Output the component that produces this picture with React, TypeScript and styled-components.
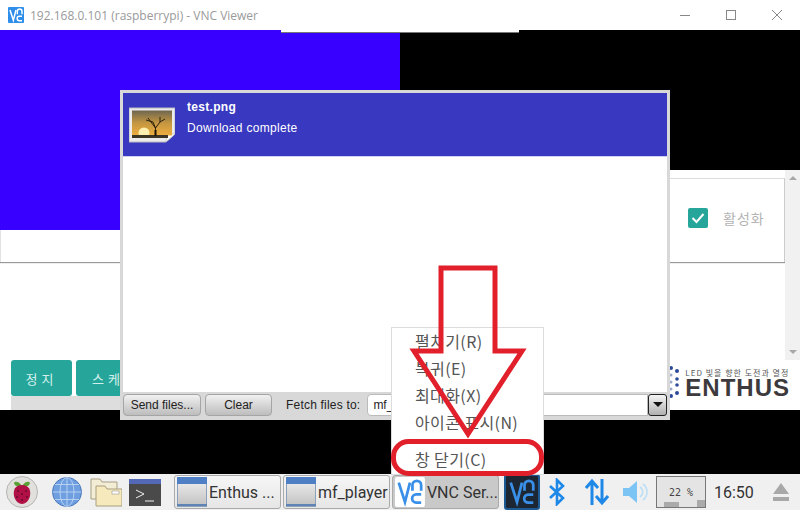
import styled, { createGlobalStyle } from 'styled-components';

const GlobalStyle = createGlobalStyle`
  html, body {
    margin: 0;
    padding: 0;
    background: #000;
  }
  * {
    box-sizing: border-box;
  }
`;

const Root = styled.div`
  position: relative;
  width: 800px;
  height: 510px;
  overflow: hidden;
  display: flex;
  flex-direction: column;
  font-family: 'Liberation Sans', Arial, sans-serif;
`;

// Barra de titulo
const TitleBar = styled.header`
  height: 30px;
  flex: none;
  background: #fff;
  display: flex;
  align-items: center;
  padding-left: 8px;
`;

const TitleText = styled.span`
  margin-left: 6px;
  font-family: 'Open Sans', sans-serif;
  font-size: 12px;
  color: #9a9a9a;
  white-space: nowrap;
`;

const WindowControls = styled.div`
  margin-left: auto;
  display: flex;
`;

const WindowButton = styled.div`
  width: 46px;
  height: 30px;
  display: flex;
  align-items: center;
  justify-content: center;
`;

const Screen = styled.main`
  flex: 1;
  background: #000;
  position: relative;
`;

const TopStrip = styled.div`
  position: absolute;
  left: 281px;
  top: 0;
  width: 238px;
  height: 3px;
  background: #fff;
  border-bottom: 1px solid #777;
`;

// Pagina por tras
const Page = styled.div`
  height: 380px;
  background: #fff;
  overflow: hidden;
`;

const TopArea = styled.div`
  height: 330px;
  display: grid;
  grid-template-columns: 400px 400px;
`;

const LeftColumn = styled.div`
  display: flex;
  flex-direction: column;
`;

const BluePreview = styled.div`
  height: 200px;
  background: #3700ff;
`;

const CardTail = styled.div`
  height: 32px;
  background: #fff;
  border-left: 1px solid #e2e2e2;
  box-shadow: 0 1px 1px #999;
`;

const RightColumn = styled.div`
  display: flex;
  flex-direction: column;
`;

const BlackPreview = styled.div`
  height: 140px;
  flex: none;
  background: #000;
`;

const RightBody = styled.div`
  flex: 1;
  display: flex;
`;

const CardWrap = styled.div`
  flex: 1;
  padding-top: 8px;
`;

const OptionCard = styled.div`
  height: 84px;
  background: #fff;
  border-top: 1px solid #ddd;
  border-right: 1px solid #ccc;
  box-shadow: 0 1px 1px #999;
  display: flex;
  align-items: center;
  padding: 0 0 6px 288px;
  gap: 15px;
`;

const CheckBox = styled.div`
  width: 20px;
  height: 20px;
  border-radius: 2px;
  background: #26a69a;
  display: flex;
  align-items: center;
  justify-content: center;
`;

const CheckLabel = styled.span`
  font-family: 'Noto Sans CJK KR', sans-serif;
  font-size: 14px;
  letter-spacing: 1px;
  color: #b4b4b4;
`;

const ScrollTrack = styled.div`
  width: 15px;
  flex: none;
  background: #f1f1f1;
  display: flex;
  flex-direction: column;
  justify-content: space-between;
  align-items: center;
  padding: 6px 0;
`;

const ScrollArrow = styled.div<{ $down?: boolean }>`
  width: 0;
  height: 0;
  border-left: 4px solid transparent;
  border-right: 4px solid transparent;
  ${(p) => (p.$down ? 'border-top: 4px solid #a8a8a8;' : 'border-bottom: 4px solid #a8a8a8;')}
`;

const BottomArea = styled.div`
  height: 50px;
  display: flex;
  justify-content: space-between;
  padding-left: 11px;
`;

const ActionGroup = styled.div`
  width: 260px;
`;

const ActionRow = styled.div`
  display: flex;
  gap: 4px;
`;

const ActionButton = styled.div<{ $w: number }>`
  height: 36px;
  width: ${(p) => p.$w}px;
  flex: none;
  background: #26a69a;
  border-radius: 3px;
  color: #d5f0ec;
  font-family: 'Noto Sans CJK KR', sans-serif;
  font-size: 13px;
  letter-spacing: 4px;
  display: flex;
  align-items: center;
  justify-content: center;
`;

const InfoStrip = styled.div`
  height: 14px;
  background: #ddd;
  padding: 13px 0 0 14px;
  font-size: 11px;
  letter-spacing: 1px;
  color: #888;
  white-space: nowrap;
  overflow: hidden;
`;

const Logo = styled.div`
  display: flex;
  align-items: center;
  gap: 5px;
  padding: 3px 10px 0 0;
  height: 41px;
`;

const LogoText = styled.div`
  display: flex;
  flex-direction: column;
`;

const LogoTag = styled.span`
  font-family: 'Noto Sans CJK KR', sans-serif;
  font-size: 8px;
  line-height: 11px;
  letter-spacing: 1px;
  color: #555;
  white-space: nowrap;
`;

const LogoName = styled.span`
  font-size: 24px;
  line-height: 20px;
  font-weight: 700;
  letter-spacing: 1px;
  color: #3c3a3c;
`;

// Janela de transferencia
const TransferDialog = styled.section`
  position: absolute;
  left: 120px;
  top: 90px;
  width: 550px;
  height: 330px;
  background: #d8d8d8;
  padding: 3px 3px 0;
  display: flex;
  flex-direction: column;
`;

const TransferHeader = styled.div`
  height: 64px;
  flex: none;
  background: #3838c0;
  border-bottom: 1px solid #d0d0f0;
  display: flex;
  padding: 7px 0 0 6px;
  gap: 12px;
  color: #fff;
`;

const FileIconSlot = styled.div`
  margin-top: 7px;
  display: flex;
`;

const FileName = styled.div`
  font-size: 12px;
  font-weight: 700;
  letter-spacing: 0.3px;
  line-height: 14px;
`;

const FileStatus = styled.div`
  font-size: 12px;
  letter-spacing: 0.3px;
  line-height: 14px;
  margin-top: 7px;
`;

const TransferBody = styled.div`
  flex: 1;
  background: #fff;
`;

const TransferFooter = styled.div`
  height: 28px;
  flex: none;
  display: flex;
  align-items: center;
  padding-bottom: 3px;
`;

const FltkButton = styled.div<{ $w: number }>`
  width: ${(p) => p.$w}px;
  height: 22px;
  flex: none;
  margin-right: 4px;
  border: 1px solid #a5a5a5;
  border-radius: 4px;
  background: linear-gradient(#f0f0f0, #bdbdbd);
  font-size: 12px;
  color: #222;
  display: flex;
  align-items: center;
  justify-content: center;
`;

const FetchLabel = styled.span`
  margin: 0 7px 0 10px;
  font-size: 12px;
  letter-spacing: 0.2px;
  color: #222;
  white-space: nowrap;
`;

const FetchInput = styled.div`
  flex: 1;
  height: 22px;
  background: #fff;
  border: 1px solid #bbb;
  border-radius: 4px 0 0 4px;
  padding-left: 5px;
  font-size: 12px;
  line-height: 20px;
  color: #222;
`;

const DropButton = styled.div`
  width: 19px;
  height: 22px;
  flex: none;
  border: 1px solid #222;
  border-radius: 3px;
  background: linear-gradient(#f4f4f4, #b0b0b0);
  display: flex;
  align-items: center;
  justify-content: center;
`;

const DropArrow = styled.div`
  width: 0;
  height: 0;
  border-left: 5px solid transparent;
  border-right: 5px solid transparent;
  border-top: 5px solid #111;
`;

// Menu de contexto
const ContextMenu = styled.ul`
  position: absolute;
  left: 391px;
  top: 327px;
  width: 153px;
  height: 148px;
  margin: 0;
  padding: 0;
  list-style: none;
  background: #fff;
  border: 1px solid #dcdcdc;
`;

const MenuItem = styled.li<{ $gap?: boolean }>`
  height: 27px;
  line-height: 27px;
  padding-left: 23px;
  margin-top: ${(p) => (p.$gap ? '10px' : '0')};
  font-family: 'Noto Sans CJK KR', sans-serif;
  font-size: 16px;
  letter-spacing: 0.4px;
  color: #555;
  white-space: nowrap;
`;

const Annotation = styled.svg`
  position: absolute;
  left: 0;
  top: 0;
  pointer-events: none;
`;

// Barra de tarefas
const Taskbar = styled.footer`
  height: 36px;
  flex: none;
  background: #f0f0f0;
  display: flex;
  align-items: center;
  padding-left: 6px;
  font-family: Roboto, sans-serif;
`;

const Launchers = styled.div`
  display: flex;
  align-items: center;
  width: 168px;
  flex: none;
`;

const LaunchIcon = styled.div<{ $w: number }>`
  width: ${(p) => p.$w}px;
  flex: none;
  display: flex;
`;

const TaskButton = styled.div<{ $active?: boolean }>`
  width: 107px;
  height: 34px;
  flex: none;
  margin-right: 2px;
  border: 1px solid #aaa;
  border-radius: 3px;
  background: ${(p) => (p.$active ? '#c9c9c9' : 'linear-gradient(#f6f6f6, #e6e6e6)')};
  display: flex;
  align-items: center;
  gap: 2px;
  padding-left: 2px;
  font-size: 16px;
  color: #333;
  white-space: nowrap;
  overflow: hidden;
`;

const TrayVnc = styled.div`
  margin-left: 3px;
  width: 36px;
  height: 36px;
  flex: none;
  background: #1c2733;
  border: 2px solid #1d5a94;
  border-radius: 3px;
  display: flex;
  align-items: center;
  justify-content: center;
`;

const TrayIcon = styled.div<{ $ml: number }>`
  margin-left: ${(p) => p.$ml}px;
  display: flex;
  flex: none;
`;

const CpuMonitor = styled.div`
  position: relative;
  margin-left: 7px;
  width: 50px;
  height: 32px;
  flex: none;
  background: #e4e4e4;
  border: 1px solid #777;
  display: flex;
  align-items: center;
  justify-content: center;
  font-family: 'DejaVu Sans Mono', monospace;
  font-size: 10px;
  color: #444;
  white-space: pre;
`;

const CpuGraph = styled.svg`
  position: absolute;
  left: 0;
  bottom: 0;
`;

const Clock = styled.span`
  margin-left: 8px;
  font-size: 16px;
  color: #333;
`;

function VncLogo({ size, bg, fg }: { size: number; bg?: string; fg: string }) {
  return (
    <svg width={size} height={size} viewBox="0 0 24 24">
      {bg && <rect width="24" height="24" rx="1.5" fill={bg} />}
      <path d="M3 4.5 L8 20 L12 4.5" fill="none" stroke={fg} strokeWidth="2.2" />
      <path d="M14 11 V6.5 A3 3 0 0 1 21 6.5 V11" fill="none" stroke={fg} strokeWidth="2.2" />
      <path d="M21 14 H17 A3 3 0 0 0 17 20.5 H21" fill="none" stroke={fg} strokeWidth="2.2" />
    </svg>
  );
}

function SunsetIcon() {
  return (
    <svg width="46" height="36" viewBox="0 0 46 36">
      <defs>
        <linearGradient id="sky" x1="0" y1="0" x2="0" y2="1">
          <stop offset="0" stopColor="#6e6650" />
          <stop offset="0.5" stopColor="#c49640" />
          <stop offset="1" stopColor="#eeae40" />
        </linearGradient>
      </defs>
      <path d="M0 1 H46 V27 L37 35 H0 Z" fill="#ececec" stroke="#bbb" />
      <path d="M37 35 L46 27 H38 Z" fill="#fff" stroke="#aaa" strokeWidth="0.5" />
      <rect x="3" y="3.5" width="40" height="25" fill="url(#sky)" />
      <circle cx="15" cy="26" r="5.5" fill="#fff0b0" />
      <rect x="3" y="28" width="36" height="3" fill="#3c3424" />
      <path
        d="M26.5 29 L26.5 21 L19 11 M26.5 21 L31 15 L36 12 M26.5 21 L24 15 L17 13 M31 15 L31 10"
        fill="none"
        stroke="#1c1408"
        strokeWidth="0.9"
      />
      <rect x="25.5" y="23" width="2" height="6" fill="#1c1408" />
    </svg>
  );
}

function WindowIcon() {
  return (
    <svg width="30" height="30" viewBox="0 0 30 30">
      <defs>
        <linearGradient id="pane" x1="0" y1="0" x2="0" y2="1">
          <stop offset="0" stopColor="#f2f2f2" />
          <stop offset="1" stopColor="#c0c0c0" />
        </linearGradient>
      </defs>
      <rect x="0.5" y="0.5" width="29" height="29" fill="url(#pane)" stroke="#8ca0b8" />
      <rect x="0" y="0" width="30" height="7" fill="#4f7fc4" />
      <rect x="0" y="27" width="30" height="2" fill="#5f83b4" />
    </svg>
  );
}

function RaspberryIcon() {
  return (
    <svg width="32" height="32" viewBox="0 0 32 32">
      <circle cx="16" cy="16" r="15.5" fill="#e2e0dc" stroke="#b5b5b5" />
      <path d="M16 10 C12 4 8 6 8 7 C9 11 13 11 16 10 C19 11 23 11 24 7 C24 6 20 4 16 10Z" fill="#5ba035" />
      <path d="M16 9 C23 9 25 14 24 20 C23 25 19 28 16 28 C13 28 9 25 8 20 C7 14 9 9 16 9Z" fill="#b01046" />
      <g fill="#6e0a2c">
        <circle cx="12" cy="15" r="1" />
        <circle cx="20" cy="15" r="1" />
        <circle cx="16" cy="18" r="1" />
        <circle cx="11" cy="21" r="1" />
        <circle cx="21" cy="21" r="1" />
        <circle cx="16" cy="24" r="1" />
      </g>
    </svg>
  );
}

function GlobeIcon() {
  return (
    <svg width="30" height="30" viewBox="0 0 30 30">
      <circle cx="15" cy="15" r="14.5" fill="#6f9fe0" stroke="#4a78bd" />
      <g fill="none" stroke="#c6dcf6" strokeWidth="0.8">
        <ellipse cx="15" cy="15" rx="7" ry="14.5" />
        <path d="M15 .5 V29.5 M.5 15 H29.5 M3 7.5 H27 M3 22.5 H27" />
      </g>
    </svg>
  );
}

function FolderIcon() {
  return (
    <svg width="32" height="30" viewBox="0 0 32 30">
      <path d="M1 2 H10 L12 5 H27 V22 H1 Z" fill="#f4edd6" stroke="#a89f80" />
      <path d="M6 9 H15 L17 12 H32 V29 H6 Z" fill="#f6e9bc" stroke="#a89f80" />
      <rect x="22" y="14" width="7" height="3" fill="#fff" stroke="#999" strokeWidth="0.6" />
    </svg>
  );
}

function TerminalIcon() {
  return (
    <svg width="32" height="27" viewBox="0 0 32 27">
      <rect width="32" height="27" fill="#4a4a4a" />
      <rect width="32" height="5" fill="#5468b8" />
      <path d="M7 11 L15 15 L7 19 M16 22 H25" fill="none" stroke="#f0f0f0" strokeWidth="1" />
    </svg>
  );
}

export default function App() {
  return (
    <Root>
      <GlobalStyle />
      <TitleBar>
        <VncLogo size={16} bg="#2f8eea" fg="#fff" />
        <TitleText>192.168.0.101 (raspberrypi) - VNC Viewer</TitleText>
        <WindowControls>
          <WindowButton>
            <svg width="10" height="10"><path d="M0 5.5 H10" stroke="#888" /></svg>
          </WindowButton>
          <WindowButton>
            <svg width="10" height="10"><rect x=".5" y=".5" width="9" height="9" fill="none" stroke="#888" /></svg>
          </WindowButton>
          <WindowButton>
            <svg width="10" height="10"><path d="M0 0 L10 10 M10 0 L0 10" stroke="#888" /></svg>
          </WindowButton>
        </WindowControls>
      </TitleBar>

      <Screen>
        <Page>
          <TopArea>
            <LeftColumn>
              <BluePreview />
              <CardTail />
            </LeftColumn>
            <RightColumn>
              <BlackPreview />
              <RightBody>
                <CardWrap>
                  <OptionCard>
                    <CheckBox>
                      <svg width="14" height="12" viewBox="0 0 14 12">
                        <path d="M1.5 6 L5.5 10 L12.5 2" fill="none" stroke="#fff" strokeWidth="2" />
                      </svg>
                    </CheckBox>
                    <CheckLabel>활성화</CheckLabel>
                  </OptionCard>
                </CardWrap>
                <ScrollTrack>
                  <ScrollArrow />
                  <ScrollArrow $down />
                </ScrollTrack>
              </RightBody>
            </RightColumn>
          </TopArea>
          <BottomArea>
            <ActionGroup>
              <ActionRow>
                <ActionButton $w={61}>정지</ActionButton>
                <ActionButton $w={80}>스케줄</ActionButton>
              </ActionRow>
              <InfoStrip>MEDIA PLAYER</InfoStrip>
            </ActionGroup>
            <Logo>
              <svg width="12" height="32" viewBox="0 0 12 32">
                <g fill="#2d4a9a">
                  <circle cx="3" cy="2" r="2" />
                  <circle cx="9" cy="5" r="2" />
                  <circle cx="3" cy="30" r="2" />
                  <circle cx="9" cy="27" r="2" />
                  <circle cx="9" cy="13" r="1.8" />
                  <circle cx="9" cy="19" r="1.8" />
                </g>
                <g fill="#9aa8cc">
                  <circle cx="3" cy="9" r="1.5" />
                  <circle cx="3" cy="16" r="1.5" />
                  <circle cx="3" cy="23" r="1.5" />
                </g>
              </svg>
              <LogoText>
                <LogoTag>LED 빛을 향한 도전과 열정</LogoTag>
                <LogoName>ENTHUS</LogoName>
              </LogoText>
            </Logo>
          </BottomArea>
        </Page>
        <TopStrip />
      </Screen>

      <Taskbar>
        <Launchers>
          <LaunchIcon $w={46}><RaspberryIcon /></LaunchIcon>
          <LaunchIcon $w={38}><GlobeIcon /></LaunchIcon>
          <LaunchIcon $w={39}><FolderIcon /></LaunchIcon>
          <LaunchIcon $w={44}><TerminalIcon /></LaunchIcon>
        </Launchers>
        <TaskButton><WindowIcon />Enthus ...</TaskButton>
        <TaskButton><WindowIcon />mf_player</TaskButton>
        <TaskButton $active>
          <VncLogo size={30} bg="#fff" fg="#3a8fe8" />VNC Ser...
        </TaskButton>
        <TrayVnc>
          <VncLogo size={30} fg="#3a8fe8" />
        </TrayVnc>
        <TrayIcon $ml={8}>
          <svg width="18" height="28" viewBox="0 0 18 28">
            <path d="M2 8 L15 20 L9 26 V2 L15 8 L2 20" fill="none" stroke="#1e88e8" strokeWidth="2.6" />
          </svg>
        </TrayIcon>
        <TrayIcon $ml={19}>
          <svg width="24" height="28" viewBox="0 0 24 28">
            <path d="M7 27 V3 M1 10 L7 3 L13 10 M17 1 V25 M11 18 L17 25 L23 18" fill="none" stroke="#1e88e8" strokeWidth="3" />
          </svg>
        </TrayIcon>
        <TrayIcon $ml={14}>
          <svg width="26" height="24" viewBox="0 0 26 24">
            <path d="M0 8 H6 L14 1 V23 L6 16 H0 Z" fill="#7cc4f4" />
            <path d="M17 7 A6 6 0 0 1 17 17 M20 4 A10 10 0 0 1 20 20" fill="none" stroke="#bcdff6" strokeWidth="1.6" />
          </svg>
        </TrayIcon>
        <CpuMonitor>
          22 %
          <CpuGraph width="48" height="10" viewBox="0 0 48 10">
            <path d="M7 10 V5 H22 V10 Z M40 10 V3 H48 V10 Z" fill="#aaa" />
          </CpuGraph>
        </CpuMonitor>
        <Clock>16:50</Clock>
        <TrayIcon $ml={19}>
          <svg width="16" height="18" viewBox="0 0 16 18">
            <path d="M8 0 L16 11 H0 Z M0 14 H16 V18 H0 Z" fill="#a8a8a8" />
          </svg>
        </TrayIcon>
      </Taskbar>

      <TransferDialog>
        <TransferHeader>
          <FileIconSlot><SunsetIcon /></FileIconSlot>
          <div>
            <FileName>test.png</FileName>
            <FileStatus>Download complete</FileStatus>
          </div>
        </TransferHeader>
        <TransferBody />
        <TransferFooter>
          <FltkButton $w={78}>Send files...</FltkButton>
          <FltkButton $w={67}>Clear</FltkButton>
          <FetchLabel>Fetch files to:</FetchLabel>
          <FetchInput>mf_player</FetchInput>
          <DropButton><DropArrow /></DropButton>
        </TransferFooter>
      </TransferDialog>

      <ContextMenu>
        <MenuItem>펼치기(R)</MenuItem>
        <MenuItem>복귀(E)</MenuItem>
        <MenuItem>최대화(X)</MenuItem>
        <MenuItem>아이콘 표시(N)</MenuItem>
        <MenuItem $gap>창 닫기(C)</MenuItem>
      </ContextMenu>

      <Annotation width="800" height="510" viewBox="0 0 800 510">
        <path
          d="M441 268 H495 V351 H522 L468 434 L414 351 H441 Z"
          fill="none"
          stroke="#e1202c"
          strokeWidth="5"
        />
        <rect x="393.5" y="441.5" width="148" height="32" rx="15" fill="none" stroke="#e1202c" strokeWidth="5" />
      </Annotation>
    </Root>
  );
}
